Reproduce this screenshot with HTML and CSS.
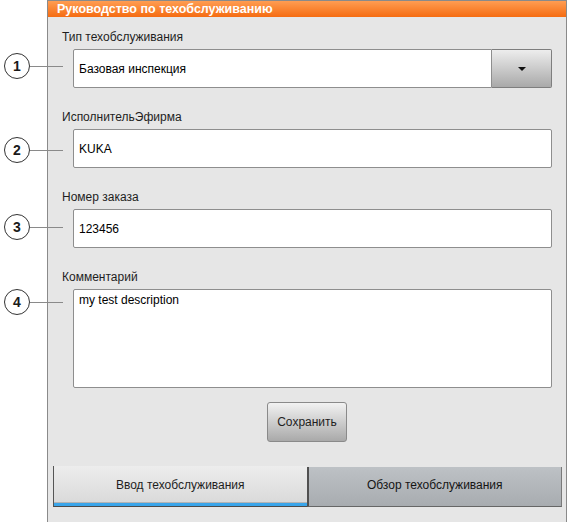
FILE: index.html
```html
<!DOCTYPE html>
<html lang="ru">
<head>
<meta charset="utf-8">
<title>Руководство по техобслуживанию</title>
<link rel="stylesheet" href="styles.css">
</head>
<body>
<div class="page">
  <div class="panel">
    <div class="header">Руководство по техобслуживанию</div>
    <div class="form">
      <div class="field">
        <div class="label">Тип техобслуживания</div>
        <div class="control">
          <div class="callout c1"><span class="num">1</span><span class="line"></span></div>
          <div class="combo">
            <div class="input combo-text">Базовая инспекция</div>
            <div class="drop"><span class="arrow"></span></div>
          </div>
        </div>
      </div>
      <div class="field">
        <div class="label">ИсполнительЭфирма</div>
        <div class="control">
          <div class="callout c2"><span class="num">2</span><span class="line"></span></div>
          <div class="input">KUKA</div>
        </div>
      </div>
      <div class="field">
        <div class="label">Номер заказа</div>
        <div class="control">
          <div class="callout c3"><span class="num">3</span><span class="line"></span></div>
          <div class="input">123456</div>
        </div>
      </div>
      <div class="field">
        <div class="label">Комментарий</div>
        <div class="control">
          <div class="callout c4"><span class="num">4</span><span class="line"></span></div>
          <div class="input area">my test description</div>
        </div>
      </div>
      <div class="actions"><div class="btn">Сохранить</div></div>
    </div>
    <div class="tabs">
      <div class="tab active">Ввод техобслуживания</div>
      <div class="tab other">Обзор техобслуживания</div>
    </div>
  </div>
</div>
</body>
</html>
```
FILE: styles.css
```css
html, body {
  margin: 0;
  background: #ffffff;
}
body {
  font-family: "Liberation Sans", Arial, sans-serif;
  font-size: 12px;
  color: #1e1e1e;
}
.page {
  padding-left: 47px;
  height: 522px;
  box-sizing: border-box;
}
.panel {
  width: 520px;
  height: 522px;
  box-sizing: border-box;
  border: 1px solid #8a8a8a;
  border-bottom: none;
  background: #e6e6e6;
  display: flex;
  flex-direction: column;
}
.header {
  height: 16px;
  line-height: 16px;
  padding-left: 9px;
  background: linear-gradient(#ff9d52, #f56c12);
  color: #ffffff;
  font-weight: bold;
  font-size: 12.5px;
}
.form {
  padding: 13px 14px 0 14px;
}
.field + .field {
  margin-top: 22px;
}
.label {
  line-height: 14px;
  margin-bottom: 5px;
}
.control {
  position: relative;
  margin-left: 11px;
}
.input {
  height: 39px;
  box-sizing: border-box;
  border: 1px solid #8e8e8e;
  border-radius: 2px;
  background: #ffffff;
  padding: 0 5px;
  display: flex;
  align-items: center;
  color: #000;
}
.combo {
  display: flex;
}
.combo-text {
  flex: 1;
  border-radius: 2px 0 0 2px;
}
.drop {
  width: 60px;
  height: 39px;
  box-sizing: border-box;
  border: 1px solid #7e7e7e;
  border-left: none;
  border-radius: 0 2px 2px 0;
  background: linear-gradient(#ededed, #a9a9a9);
  display: flex;
  align-items: center;
  justify-content: center;
}
.arrow {
  width: 0;
  height: 0;
  border-left: 4px solid transparent;
  border-right: 4px solid transparent;
  border-top: 4px solid #111;
  margin-top: 1px;
}
.input.area {
  height: 99px;
  align-items: flex-start;
  padding-top: 3px;
}
.callout {
  position: absolute;
  left: -69px;
  width: 59px;
  display: flex;
  align-items: center;
}
.c1 { top: 4px; }
.c2 { top: 8px; }
.c3 { top: 5px; }
.c4 { top: 0; }
.num {
  width: 24px;
  height: 24px;
  border: 1px solid #333;
  border-radius: 50%;
  background: #fff;
  display: flex;
  align-items: center;
  justify-content: center;
  font-weight: bold;
  font-size: 14px;
  color: #1a1a1a;
  flex: none;
}
.line {
  flex: 1;
  height: 1px;
  background: #8a8a8a;
}
.actions {
  display: flex;
  justify-content: center;
  margin-top: 14px;
}
.btn {
  width: 80px;
  height: 40px;
  box-sizing: border-box;
  border: 1px solid #8a8a8a;
  border-radius: 3px;
  background: linear-gradient(#f2f2f2, #a9a9a9);
  display: flex;
  align-items: center;
  justify-content: center;
  color: #1e1e1e;
}
.tabs {
  display: flex;
  margin-top: 24px;
  padding: 0 4px 0 5px;
  height: 41px;
}
.tab {
  flex: 1;
  box-sizing: border-box;
  display: flex;
  align-items: center;
  justify-content: center;
  padding-bottom: 3px;
}
.tab.active {
  border-left: 1px solid #555;
  border-bottom: 1px solid #4b4b4b;
  background: linear-gradient(#ededed, #d8d8d8);
  box-shadow: inset 0 -3px 0 #3aa5ea, inset 0 -4px 0 #b4b4b4;
}
.tab.other {
  margin-top: 1px;
  border-left: 2px solid #505050;
  border-right: 1px solid #7a7a7a;
  border-bottom: 1px solid #666;
  background: linear-gradient(#bdc1c5, #a8acb0);
  color: #151515;
}
```
